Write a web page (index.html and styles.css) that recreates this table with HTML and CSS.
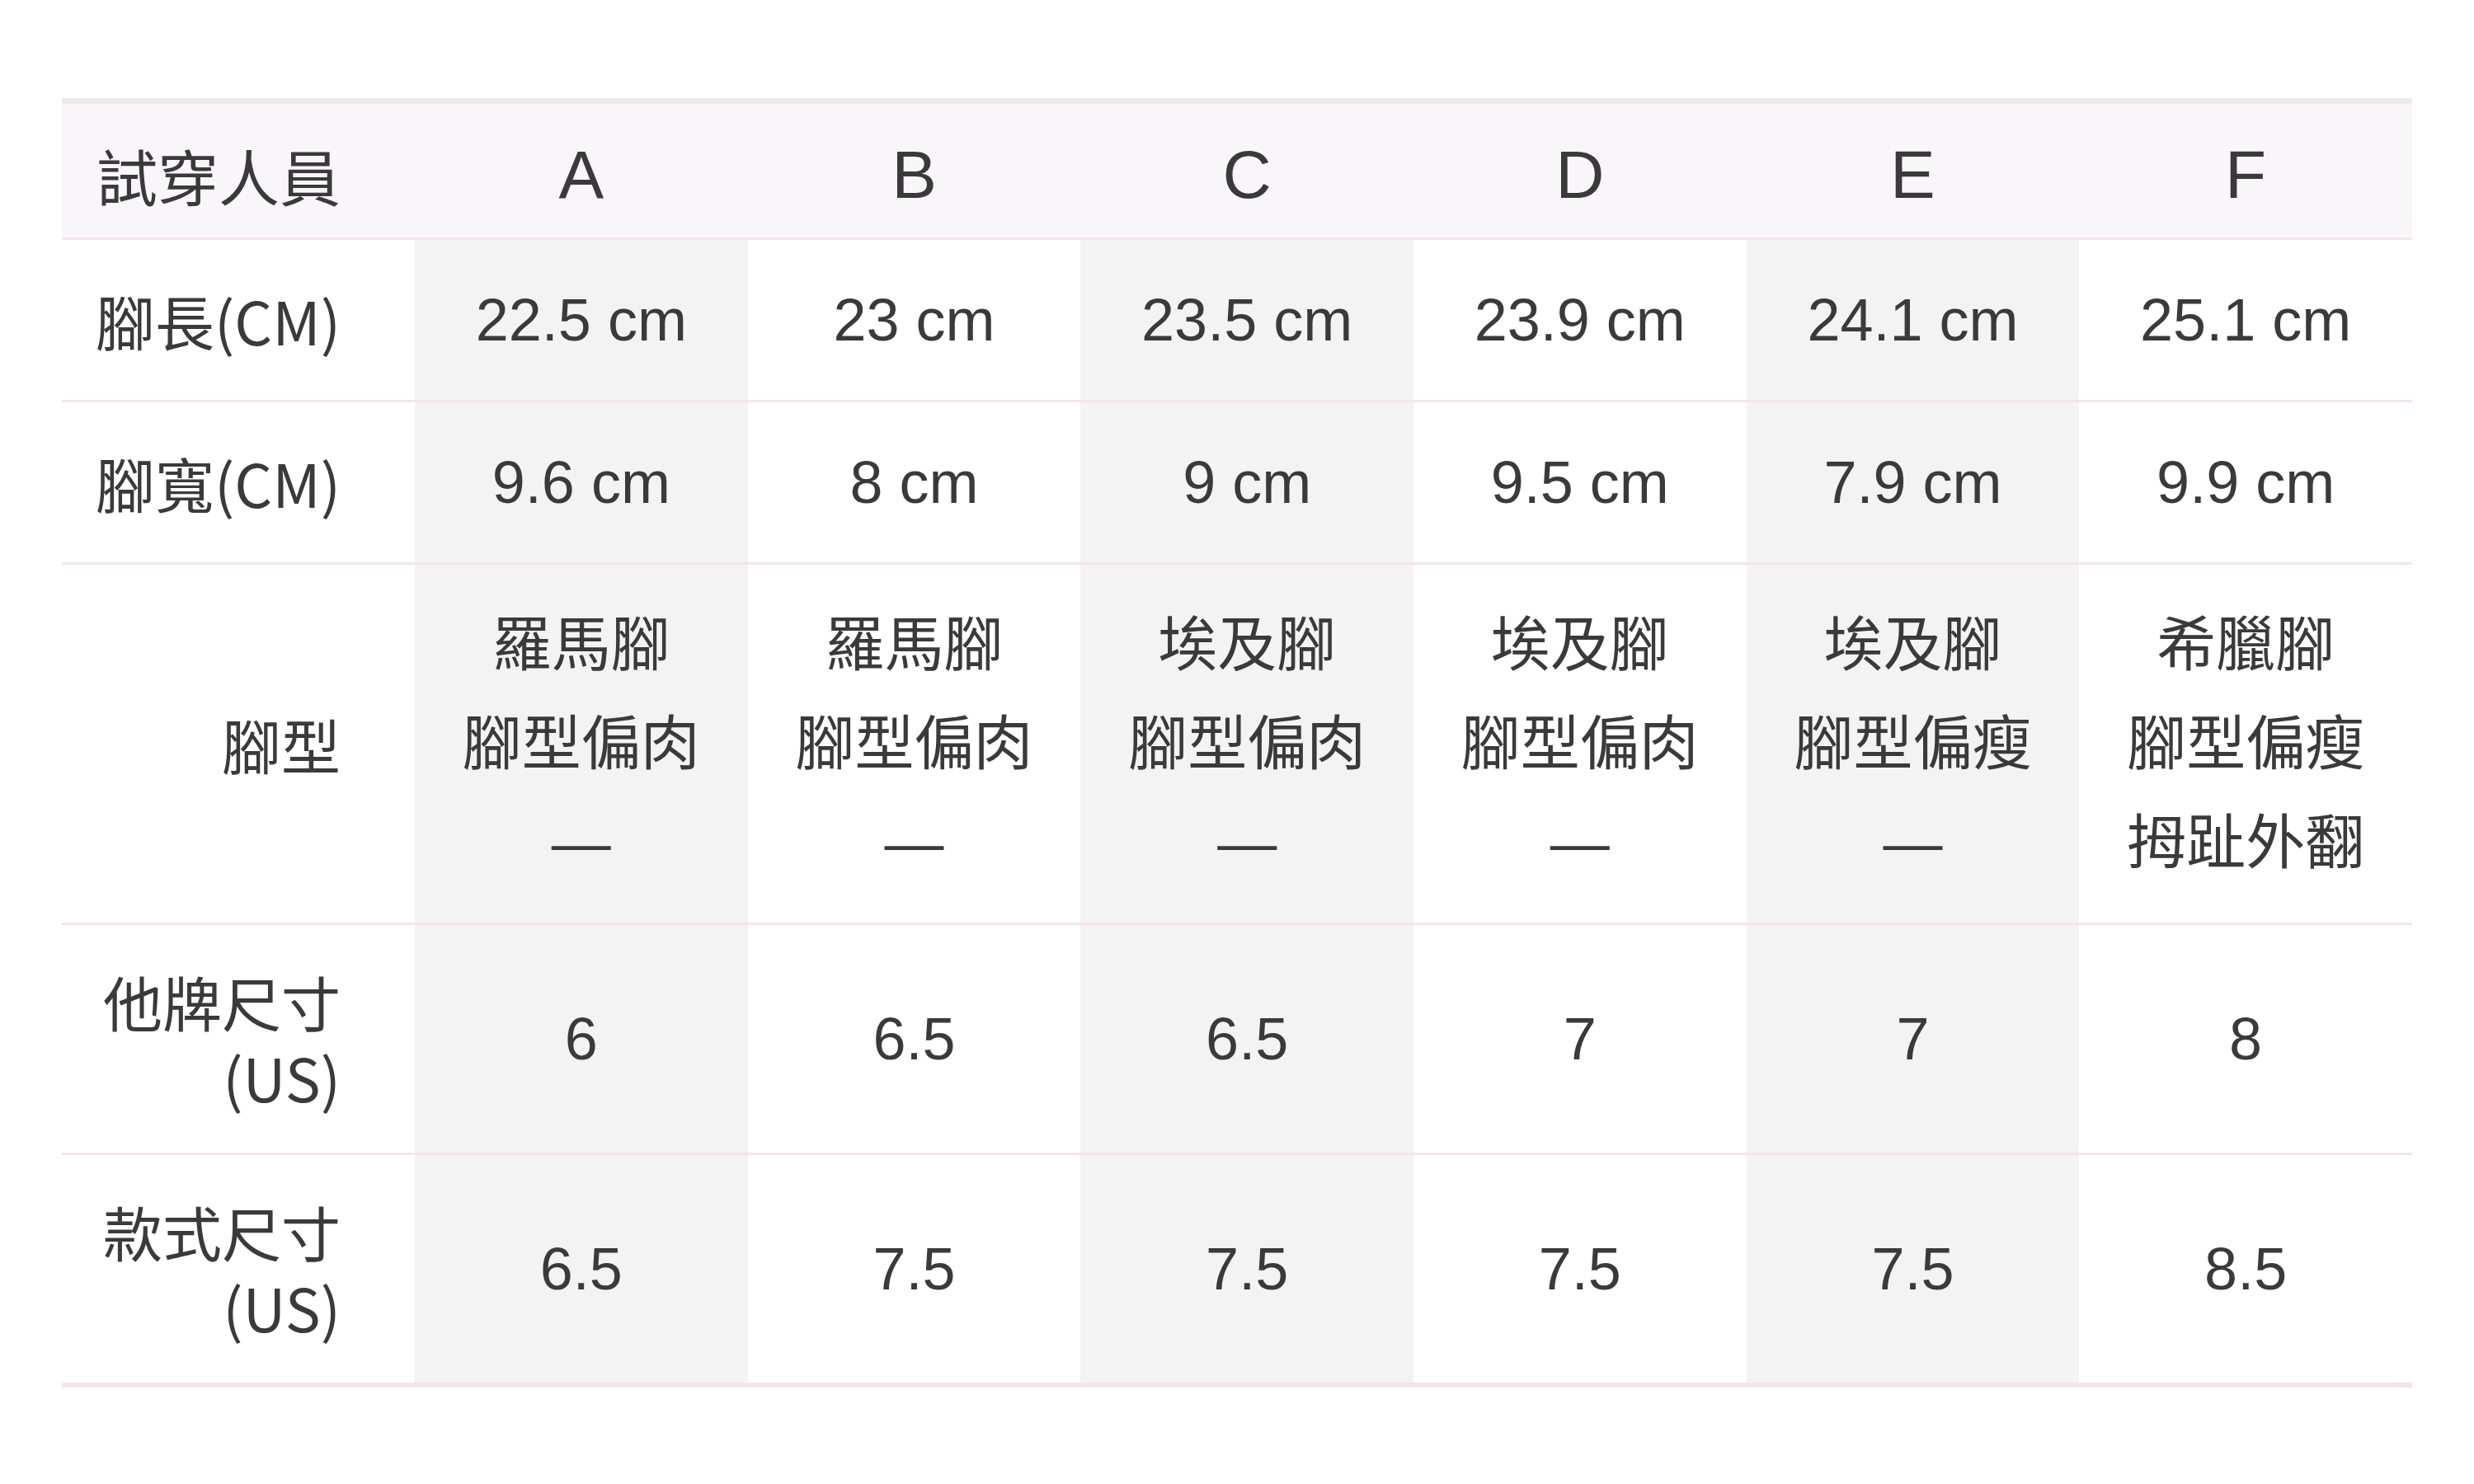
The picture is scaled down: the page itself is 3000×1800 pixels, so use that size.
FILE: index.html
```html
<!DOCTYPE html>
<html lang="zh-Hant">
<head>
<meta charset="utf-8">
<title>試穿尺寸表</title>
<link rel="stylesheet" href="styles.css">
</head>
<body>
<main class="page">
  <table class="size-table">
    <colgroup>
      <col class="col-label">
      <col><col><col><col><col><col>
    </colgroup>
    <thead>
      <tr>
        <th class="label head-label">試穿人員</th>
        <th class="head-cell">A</th>
        <th class="head-cell">B</th>
        <th class="head-cell">C</th>
        <th class="head-cell">D</th>
        <th class="head-cell">E</th>
        <th class="head-cell">F</th>
      </tr>
    </thead>
    <tbody>
      <tr>
        <th class="label">腳長(CM)</th>
        <td>22.5 cm</td><td>23 cm</td><td>23.5 cm</td><td>23.9 cm</td><td>24.1 cm</td><td>25.1 cm</td>
      </tr>
      <tr>
        <th class="label">腳寬(CM)</th>
        <td>9.6 cm</td><td>8 cm</td><td>9 cm</td><td>9.5 cm</td><td>7.9 cm</td><td>9.9 cm</td>
      </tr>
      <tr>
        <th class="label">腳型</th>
        <td>羅馬腳<br>腳型偏肉<br><span class="dash">—</span></td>
        <td>羅馬腳<br>腳型偏肉<br><span class="dash">—</span></td>
        <td>埃及腳<br>腳型偏肉<br><span class="dash">—</span></td>
        <td>埃及腳<br>腳型偏肉<br><span class="dash">—</span></td>
        <td>埃及腳<br>腳型偏瘦<br><span class="dash">—</span></td>
        <td>希臘腳<br>腳型偏瘦<br>拇趾外翻</td>
      </tr>
      <tr>
        <th class="label">他牌尺寸<br>(US)</th>
        <td>6</td><td>6.5</td><td>6.5</td><td>7</td><td>7</td><td>8</td>
      </tr>
      <tr class="last">
        <th class="label">款式尺寸<br>(US)</th>
        <td>6.5</td><td>7.5</td><td>7.5</td><td>7.5</td><td>7.5</td><td>8.5</td>
      </tr>
    </tbody>
  </table>
</main>
</body>
</html>
```
FILE: styles.css
```css
html, body {
  margin: 0;
  padding: 0;
  background: #ffffff;
}

.page {
  padding: 119px 75px 0;
}

.size-table {
  width: 100%;
  table-layout: fixed;
  border-collapse: separate;
  border-spacing: 0;
  color: #3a3a3a;
}

.col-label {
  width: 428px;
}

.size-table th,
.size-table td {
  padding: 37px 0;
  border-bottom: 3px solid #f3e6eb;
  vertical-align: middle;
  font-weight: normal;
}

.size-table thead th {
  background: #f8f6f9;
  border-top: 7px solid #f3e6eb;
  padding-top: 42px;
  padding-bottom: 32px;
  line-height: 88px;
}

.size-table .label {
  text-align: right;
  padding: 46px 90px 46px 0;
  font-family: "Noto Sans CJK TC", "Liberation Sans", sans-serif;
  font-size: 72px;
  line-height: 92px;
}

.size-table thead .head-label {
  padding-top: 42px;
  padding-bottom: 32px;
  font-size: 74px;
  line-height: 88px;
}

.size-table .head-cell {
  text-align: center;
  font-family: "Liberation Sans", "Noto Sans CJK TC", sans-serif;
  font-size: 82px;
}

.size-table td {
  text-align: center;
  font-family: "Liberation Sans", "Noto Sans CJK TC", sans-serif;
  font-size: 72px;
  line-height: 120px;
}

.size-table tbody td:nth-child(even) {
  background: #f3f3f3;
}

.size-table tr.last th,
.size-table tr.last td {
  border-bottom-width: 6px;
}

.dash {
  font-family: "Liberation Sans", sans-serif;
}
```
